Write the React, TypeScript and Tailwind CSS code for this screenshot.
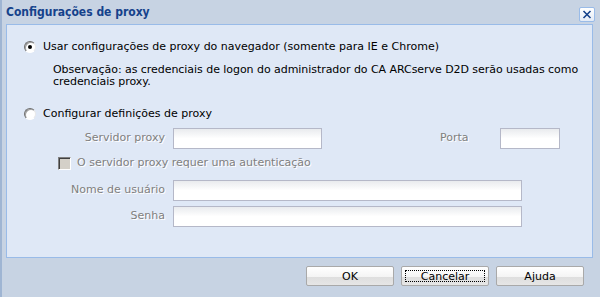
import React from "react";

const font = { fontFamily: '"DejaVu Sans", sans-serif' };

function Radio({ checked }: { checked?: boolean }) {
  return (
    <span className="relative inline-flex h-[12px] w-[12px] shrink-0 items-center justify-center rounded-full border border-[#6d6d6d] border-b-[#ffffff] border-r-[#e8e8e8] bg-white shadow-[inset_1px_1px_0_#a0a0a0]">
      {checked && <span className="h-[4px] w-[4px] rounded-full bg-black" />}
    </span>
  );
}

function Input({ w }: { w: string }) {
  return (
    <div
      className={`${w} h-[21px] border border-[#b5b8c8] bg-gradient-to-b from-[#e9ebee] via-white to-white`}
    />
  );
}

function Label({ children, w = "w-[158px]" }: { children: React.ReactNode; w?: string }) {
  return (
    <span className={`${w} text-right text-[#7f7f7f] [text-shadow:1px_1px_0_#ffffff]`}>{children}</span>
  );
}

function Button({ children, focus }: { children: React.ReactNode; focus?: boolean }) {
  return (
    <div className="relative flex h-[20px] w-[88px] items-center justify-center overflow-hidden rounded-[2px] border border-[#a9a9a9] bg-[linear-gradient(to_bottom,#ffffff_0%,#f4f4f4_55%,#dedede_56%,#e6e6e6_100%)] text-black">
      {focus && <span className="absolute inset-x-[3px] inset-y-[3px] border border-dotted border-black" />}
      <span className="leading-[13px]">{children}</span>
    </div>
  );
}

export default function App() {
  return (
    <div
      className="flex h-[297px] w-[600px] flex-col border-l-2 border-[#9fb5d3] bg-[#c7d3e3] text-[11px] text-black"
      style={font}
    >
      <div className="flex h-[24px] shrink-0 items-center justify-between pl-[4px] pr-[5px]">
        <span
          className="text-[12px] font-bold text-[#15428b]"
          style={{ fontFamily: '"DejaVu Sans Condensed", "DejaVu Sans", sans-serif' }}
        >
          Configurações de proxy
        </span>
        <div className="mt-[4px] flex h-[15px] w-[16px] items-center justify-center rounded-[2px] border border-[#99bbe8] bg-gradient-to-b from-white to-[#e3ebf6]">
          <svg width="10" height="9" viewBox="0 0 10 9">
            <path d="M1.5 1 L8.5 8 M8.5 1 L1.5 8" stroke="#15428b" strokeWidth="1.6" />
          </svg>
        </div>
      </div>
      <div className="ml-[4px] mr-[7px] flex h-[234px] flex-col border border-[#99bbe8] bg-[#dfe8f6]">
        <div className="ml-[17px] mt-[14px] flex items-center gap-[7px]">
          <Radio checked />
          <span>Usar configurações de proxy do navegador (somente para IE e Chrome)</span>
        </div>
        <p className="ml-[46px] mr-[2px] mt-[8px] leading-[12px] tracking-[-0.05px]">
          Observação: as credenciais de logon do administrador do CA ARCserve D2D serão usadas como credenciais proxy.
        </p>
        <div className="ml-[17px] mt-[18px] flex items-center gap-[7px]">
          <Radio />
          <span>Configurar definições de proxy</span>
        </div>
        <div className="mt-[6px] flex items-center gap-[8px]">
          <Label>Servidor proxy</Label>
          <Input w="w-[149px]" />
          <span className="ml-[110px] w-[52px] text-[#7f7f7f] [text-shadow:1px_1px_0_#ffffff]">Porta</span>
          <Input w="w-[60px]" />
        </div>
        <div className="ml-[51px] mt-[6px] flex items-center gap-[6px]">
          <span className="h-[13px] w-[13px] border border-[#808080] border-b-white border-r-white bg-[#d4d0c8] shadow-[inset_1px_1px_0_#404040]" />
          <span className="text-[#7f7f7f] [text-shadow:1px_1px_0_#ffffff]">O servidor proxy requer uma autenticação</span>
        </div>
        <div className="mt-[8px] flex items-center gap-[8px]">
          <Label>Nome de usuário</Label>
          <Input w="w-[349px]" />
        </div>
        <div className="mt-[5px] flex items-center gap-[8px]">
          <Label>Senha</Label>
          <Input w="w-[349px]" />
        </div>
      </div>
      <div className="mr-[16px] mt-[8px] flex justify-end gap-[7px]">
        <Button>OK</Button>
        <Button focus>Cancelar</Button>
        <Button>Ajuda</Button>
      </div>
    </div>
  );
}
